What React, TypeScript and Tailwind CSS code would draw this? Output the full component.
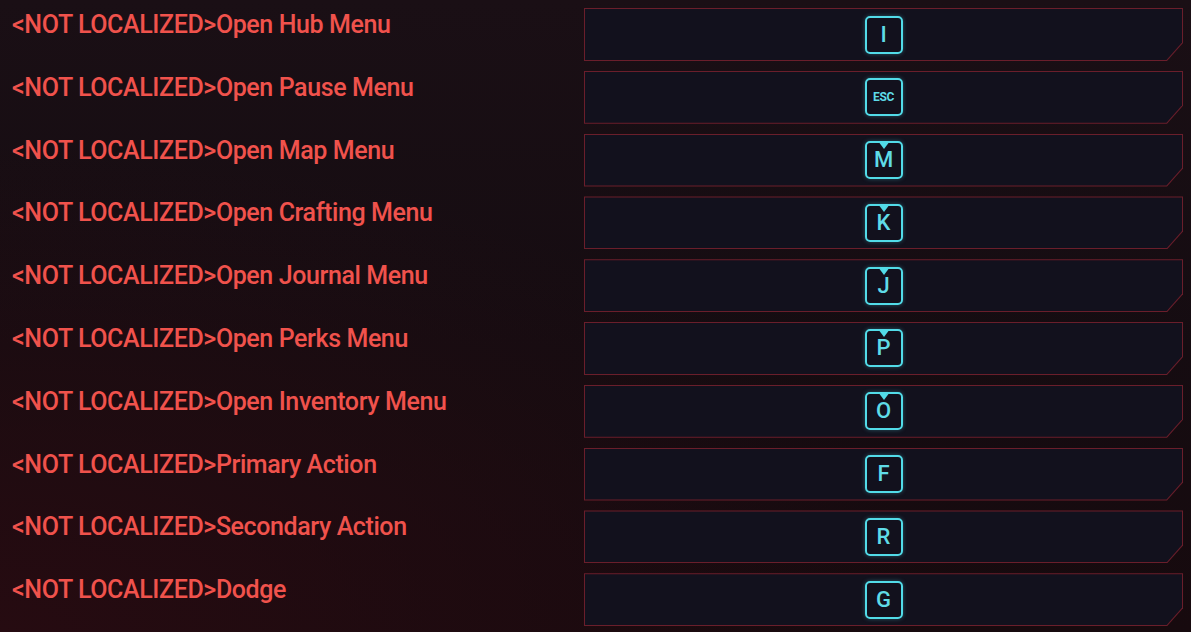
import React from "react";

type Row = { label: string; key: string; arrow?: boolean; small?: boolean };

const rows: Row[] = [
  { label: "Open Hub Menu", key: "I" },
  { label: "Open Pause Menu", key: "ESC", small: true },
  { label: "Open Map Menu", key: "M", arrow: true },
  { label: "Open Crafting Menu", key: "K", arrow: true },
  { label: "Open Journal Menu", key: "J", arrow: true },
  { label: "Open Perks Menu", key: "P", arrow: true },
  { label: "Open Inventory Menu", key: "O", arrow: true },
  { label: "Primary Action", key: "F" },
  { label: "Secondary Action", key: "R" },
  { label: "Dodge", key: "G" },
];

function KeyCap({ k, arrow, small }: { k: string; arrow?: boolean; small?: boolean }) {
  return (
    <div className="relative flex h-[38px] w-[38px] items-center justify-center rounded-[5px] border-2 border-[#52dbe8] shadow-[0_0_4px_rgba(79,214,228,0.35)]">
      {arrow && (
        <div className="absolute -top-[2px] left-1/2 h-0 w-0 -translate-x-1/2 border-l-[6px] border-r-[6px] border-t-[8px] border-l-transparent border-r-transparent border-t-[#52dbe8]" />
      )}
      <span
        className={
          small
            ? "text-[12px] font-bold leading-none tracking-[-0.3px] text-[#5fdbe7]"
            : "text-[22px] font-medium leading-none text-[#5fdbe7]"
        }
        style={{ fontFamily: '"Roboto", sans-serif' }}
      >
        {k}
      </span>
    </div>
  );
}

export default function App() {
  return (
    <div className="h-[632px] w-[1191px] overflow-hidden bg-[radial-gradient(ellipse_at_0%_100%,#260b11_0%,rgba(26,12,16,0)_55%),linear-gradient(180deg,#1a0f15_0%,#150c11_55%,#170a0e_100%)]">
      <div className="flex flex-col gap-y-[9.8px] pt-[8px]">
        {rows.map((r) => (
          <div key={r.label} className="flex h-[53px]">
            <div className="w-[584px] pl-[12px] pt-[4px]">
              <span
                className="whitespace-nowrap text-[25px] font-medium leading-[25px] tracking-[-0.4px] text-[#f0524c]"
                style={{ fontFamily: '"Roboto", sans-serif' }}
              >
                {"<NOT LOCALIZED>" + r.label}
              </span>
            </div>
            <div className="h-[53px] w-[599px] bg-[#6a1e2b] p-px [clip-path:polygon(0_0,100%_0,100%_calc(100%-18px),calc(100%-16px)_100%,0_100%)]">
              <div className="flex h-full w-full items-center justify-center bg-[#12111d] [clip-path:polygon(0_0,100%_0,100%_calc(100%-17.5px),calc(100%-15.5px)_100%,0_100%)]">
                <KeyCap k={r.key} arrow={r.arrow} small={r.small} />
              </div>
            </div>
          </div>
        ))}
      </div>
    </div>
  );
}
